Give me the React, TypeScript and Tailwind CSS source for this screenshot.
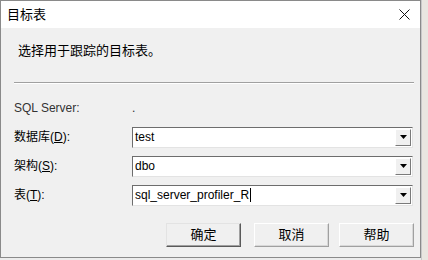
import React from 'react';

const font = { fontFamily: '"Liberation Sans", "Noto Sans CJK SC", sans-serif' };

function Combo({ value, caret }: { value: string; caret?: boolean }) {
  return (
    <div className="flex h-[21px] w-[281px] items-center border border-t-[#6d6d6d] border-l-[#6d6d6d] border-r-[#e3e3e3] border-b-[#e3e3e3] bg-white">
      <div className="flex flex-1 items-center pl-[2px] text-[12px] text-black">
        {value}
        {caret && <span className="ml-[1px] inline-block h-[14px] w-px bg-black" />}
      </div>
      <div className="mr-[1px] flex h-[17px] w-[16px] items-center justify-center border border-t-white border-l-white border-r-[#7a7a7a] border-b-[#7a7a7a] bg-[#f0f0f0]">
        <svg width="7" height="4" viewBox="0 0 7 4">
          <path d="M0 0h7L3.5 4z" fill="#000" />
        </svg>
      </div>
    </div>
  );
}

function Btn({ label, focused, className }: { label: string; focused?: boolean; className?: string }) {
  return (
    <button
      type="button"
      className={`flex h-[24px] w-[75px] items-center justify-center bg-[#f0f0f0] text-[13px] text-black border ${
        focused
          ? 'border-t-[#e3e3e3] border-l-[#e3e3e3] border-r-[#5a5a5a] border-b-[#5a5a5a] shadow-[inset_-1px_-1px_0_#a0a0a0]'
          : 'border-t-white border-l-white border-r-[#a0a0a0] border-b-[#a0a0a0] shadow-[inset_-1px_-1px_0_#d8d8d8]'
      } ${className ?? ''}`}
    >
      {label}
    </button>
  );
}

function Label({ text, key1 }: { text: string; key1: string }) {
  return (
    <span className="w-[118px] text-[12px] text-black">
      {text}(<span className="underline">{key1}</span>):
    </span>
  );
}

export default function App() {
  return (
    <div className="flex h-[260px] w-[428px] bg-[#ececec]" style={font}>
      <div className="flex h-[258px] w-[421px] flex-col border border-[#8a8a8a] bg-[#f0f0f0]">
        <div className="flex h-[27px] items-center justify-between bg-white pl-[6px] pr-[10px]">
          <span className="text-[13px] text-black">目标表</span>
          <svg width="11" height="11" viewBox="0 0 11 11">
            <path d="M0.5 0.5l10 10M10.5 0.5l-10 10" stroke="#111" strokeWidth="1" />
          </svg>
        </div>
        <div className="flex flex-1 flex-col pl-[13px] pr-[6px]">
          <div className="pl-[4px] pt-[13px] text-[13px] text-black">选择用于跟踪的目标表。</div>
          <div className="mt-[21px] h-[2px] border-t border-[#a0a0a0] border-b border-b-white" />
          <div className="mt-[15px] flex items-center text-[12px] text-[#333]">
            <span className="w-[118px]">SQL Server:</span>
            <span>.</span>
          </div>
          <div className="mt-[10px] flex flex-col gap-[8px]">
            <div className="flex items-center">
              <Label text="数据库" key1="D" />
              <Combo value="test" />
            </div>
            <div className="flex items-center">
              <Label text="架构" key1="S" />
              <Combo value="dbo" />
            </div>
            <div className="flex items-center">
              <Label text="表" key1="T" />
              <Combo value="sql_server_profiler_R" caret />
            </div>
          </div>
          <div className="mt-[17px] flex justify-end">
            <Btn label="确定" focused />
            <Btn label="取消" className="ml-[13px]" />
            <Btn label="帮助" className="ml-[10px]" />
          </div>
        </div>
      </div>
      <div className="flex-1 border-l border-[#c8c8c8] bg-[#e9e6e0]" />
    </div>
  );
}
